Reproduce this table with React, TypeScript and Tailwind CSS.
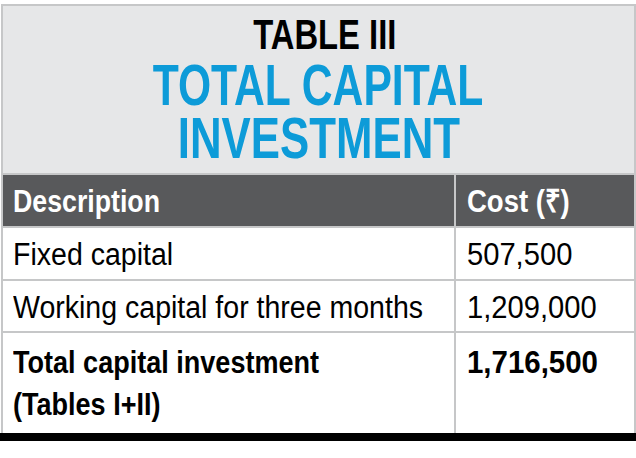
import { Fragment, type ReactNode } from "react";

// condensed look: Liberation Sans squeezed horizontally
const Squeeze = ({ x, center, children }: { x: string; center?: boolean; children: ReactNode }) => (
  <span className={`inline-block whitespace-nowrap ${center ? "origin-center" : "origin-left"} ${x}`}>
    {children}
  </span>
);

const rows = [
  { label: "Fixed capital", cost: "507,500", h: "h-[51px]" },
  { label: "Working capital for three months", cost: "1,209,000", h: "h-[50px]" },
];

export default function App() {
  return (
    <div className="w-[636px] h-[458px] bg-white pt-1 font-['Liberation_Sans',Arial,sans-serif]">
      <div className="ml-px w-[635px] border-2 border-b-0 border-[#c6c7c8] bg-[#c6c7c8]">
        {/* title */}
        <div className="h-[167px] bg-[#e6e7e8] pt-[8px] text-center">
          <div className="pl-[12px] text-[42px] leading-[42px] font-bold text-black">
            <Squeeze x="scale-x-[0.78]" center>
              TABLE III
            </Squeeze>
          </div>
          <div className="mt-[2px] text-[58px] leading-[53px] font-bold text-[#0d9bd8]">
            <Squeeze x="scale-x-[0.735]" center>
              TOTAL CAPITAL
            </Squeeze>
            <br />
            <Squeeze x="scale-x-[0.755]" center>
              INVESTMENT
            </Squeeze>
          </div>
        </div>

        <div className="mt-[2px] grid grid-cols-[451px_1fr] gap-[2px]">
          <div className="flex h-[51px] items-center bg-[#58595b] pl-[10px] text-[32px] leading-[36px] font-bold text-white">
            <Squeeze x="scale-x-[0.835]">Description</Squeeze>
          </div>
          <div className="flex h-[51px] items-center bg-[#58595b] pl-[11px] text-[32px] leading-[36px] font-bold text-white">
            <Squeeze x="scale-x-[0.86]">Cost (₹)</Squeeze>
          </div>

          {rows.map((r) => (
            <Fragment key={r.label}>
              <div className={`${r.h} bg-white pl-[10px] pt-[9px] text-[31px] leading-[36px] text-black`}>
                <Squeeze x="scale-x-[0.92]">{r.label}</Squeeze>
              </div>
              <div className={`${r.h} bg-white pl-[11px] pt-[9px] text-[31px] leading-[36px] text-black`}>
                <Squeeze x="scale-x-[0.94]">{r.cost}</Squeeze>
              </div>
            </Fragment>
          ))}

          <div className="h-[100px] bg-white pl-[10px] pt-[8px] text-[32px] leading-[42px] font-bold text-black">
            <Squeeze x="scale-x-[0.845]">Total capital investment</Squeeze>
            <br />
            <Squeeze x="scale-x-[0.845]">(Tables I+II)</Squeeze>
          </div>
          <div className="h-[100px] bg-white pl-[11px] pt-[8px] text-[32px] leading-[42px] font-bold text-black">
            <Squeeze x="scale-x-[0.92]">1,716,500</Squeeze>
          </div>
        </div>
      </div>
      <div className="h-2 w-full bg-black" />
    </div>
  );
}
